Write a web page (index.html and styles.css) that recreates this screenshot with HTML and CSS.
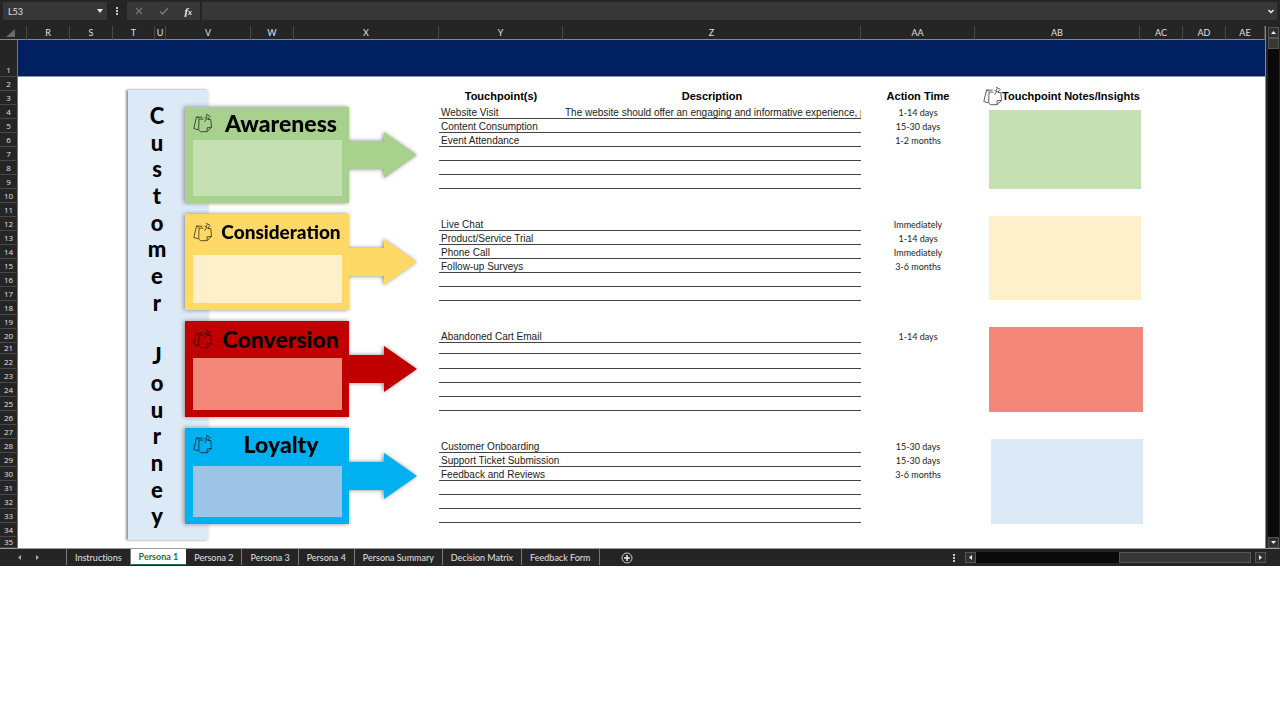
FILE: index.html
```html
<!DOCTYPE html>
<html lang="en">
<head>
<meta charset="utf-8">
<title>Customer Journey</title>
<link rel="stylesheet" href="styles.css">
</head>
<body>
<svg class="defs" aria-hidden="true">
  <symbol id="note" viewBox="0 0 20 20">
    <path d="M6 5 3.500 4 .8 15.500l4.500 1.300M3.500 4l6 .2M10.500 6.200 6 6l-.3 11 1.800 1.700h6.500l4.500-4.200-.7-8-2.300.2M18.500 14.500l-4.300.2-.2 4M11.500 4.200l4.500 2.600M13.200 4.800 14 2.500M16.500 4l-1.300 2M13 1.200l4.500 2.300M13.500 5.800l-2 3" fill="none" stroke="currentColor" stroke-width=".9"/>
  </symbol>
  <symbol id="arrow" viewBox="0 0 68 46">
    <path d="M0 9h35V0l33 23-33 23v-9H0z" fill="currentColor"/>
  </symbol>
</svg>
<main class="app">
  <header class="formula-bar">
    <div class="name-box">
      <input class="name-input" aria-label="Name box" value="L53">
      <button class="icon-button" aria-label="Open name list"><svg width="6" height="4"><path d="M0 0h6L3 4z" fill="#e8e8e8"/></svg></button>
    </div>
    <svg class="grip" width="2" height="8"><path d="M0 0h2v2H0zM0 3h2v2H0zM0 6h2v2H0z" fill="#ccc"/></svg>
    <div class="formula-actions">
      <button class="icon-button" aria-label="Cancel"><svg width="8" height="8"><path d="M1 1l6 6M7 1 1 7" stroke="#777" stroke-width="1.300"/></svg></button>
      <button class="icon-button" aria-label="Enter"><svg width="10" height="8"><path d="M1 4.500 3.500 7 9 1" fill="none" stroke="#777" stroke-width="1.500"/></svg></button>
      <button class="icon-button fx" aria-label="Insert function">f<small>x</small></button>
    </div>
    <div class="formula-field">
      <input class="formula-input" aria-label="Formula">
      <button class="icon-button" aria-label="Expand formula bar"><svg width="6" height="5"><path d="M.5 1 3 3.500 5.500 1" fill="none" stroke="#eee" stroke-width="1.400"/></svg></button>
    </div>
  </header>

  <div class="workspace">
    <div class="sheet">
      <table class="grid">
        <colgroup>
          <col class="c-head"><col class="c-q"><col class="c-m"><col class="c-m"><col class="c-t"><col class="c-u"><col class="c-v"><col class="c-m"><col class="c-x"><col class="c-y"><col class="c-z"><col class="c-aa"><col class="c-ab"><col class="c-m"><col class="c-m"><col>
        </colgroup>
        <thead>
          <tr>
            <th class="corner"><svg width="9" height="8"><path d="M9 0v8H0z" fill="#6a6a6a"/></svg></th>
            <th></th><th>R</th><th>S</th><th>T</th><th>U</th><th>V</th><th>W</th><th>X</th><th>Y</th><th>Z</th><th>AA</th><th>AB</th><th>AC</th><th>AD</th><th>AE</th>
          </tr>
        </thead>
        <tbody>
          <tr class="banner"><th>1</th><td colspan="15"></td></tr>
          <tr><th>2</th><td colspan="15"></td></tr>
          <tr class="titles"><th>3</th><td colspan="8"></td><td>Touchpoint(s)</td><td>Description</td><td>Action Time</td><td class="notes-title">Touchpoint Notes/Insights</td><td colspan="3"></td></tr>
          <tr class="line"><th>4</th><td colspan="8"></td><td>Website Visit</td><td>The website should offer an engaging and informative experience, pro</td><td>1-14 days</td><td colspan="4"></td></tr>
          <tr class="line"><th>5</th><td colspan="8"></td><td>Content Consumption</td><td></td><td>15-30 days</td><td colspan="4"></td></tr>
          <tr class="line"><th>6</th><td colspan="8"></td><td>Event Attendance</td><td></td><td>1-2 months</td><td colspan="4"></td></tr>
          <tr class="line"><th>7</th><td colspan="8"></td><td></td><td></td><td></td><td colspan="4"></td></tr>
          <tr class="line"><th>8</th><td colspan="8"></td><td></td><td></td><td></td><td colspan="4"></td></tr>
          <tr class="line"><th>9</th><td colspan="8"></td><td></td><td></td><td></td><td colspan="4"></td></tr>
          <tr><th>10</th><td colspan="15"></td></tr>
          <tr><th>11</th><td colspan="15"></td></tr>
          <tr class="line"><th>12</th><td colspan="8"></td><td>Live Chat</td><td></td><td>Immediately</td><td colspan="4"></td></tr>
          <tr class="line"><th>13</th><td colspan="8"></td><td>Product/Service Trial</td><td></td><td>1-14 days</td><td colspan="4"></td></tr>
          <tr class="line"><th>14</th><td colspan="8"></td><td>Phone Call</td><td></td><td>Immediately</td><td colspan="4"></td></tr>
          <tr class="line"><th>15</th><td colspan="8"></td><td>Follow-up Surveys</td><td></td><td>3-6 months</td><td colspan="4"></td></tr>
          <tr class="line"><th>16</th><td colspan="8"></td><td></td><td></td><td></td><td colspan="4"></td></tr>
          <tr class="line"><th>17</th><td colspan="8"></td><td></td><td></td><td></td><td colspan="4"></td></tr>
          <tr><th>18</th><td colspan="15"></td></tr>
          <tr><th>19</th><td colspan="15"></td></tr>
          <tr class="line"><th>20</th><td colspan="8"></td><td>Abandoned Cart Email</td><td></td><td>1-14 days</td><td colspan="4"></td></tr>
          <tr class="line short"><th>21</th><td colspan="8"></td><td></td><td></td><td></td><td colspan="4"></td></tr>
          <tr class="line tall"><th>22</th><td colspan="8"></td><td></td><td></td><td></td><td colspan="4"></td></tr>
          <tr class="line"><th>23</th><td colspan="8"></td><td></td><td></td><td></td><td colspan="4"></td></tr>
          <tr class="line"><th>24</th><td colspan="8"></td><td></td><td></td><td></td><td colspan="4"></td></tr>
          <tr class="line"><th>25</th><td colspan="8"></td><td></td><td></td><td></td><td colspan="4"></td></tr>
          <tr><th>26</th><td colspan="15"></td></tr>
          <tr><th>27</th><td colspan="15"></td></tr>
          <tr class="line"><th>28</th><td colspan="8"></td><td>Customer Onboarding</td><td></td><td>15-30 days</td><td colspan="4"></td></tr>
          <tr class="line"><th>29</th><td colspan="8"></td><td>Support Ticket Submission</td><td></td><td>15-30 days</td><td colspan="4"></td></tr>
          <tr class="line"><th>30</th><td colspan="8"></td><td>Feedback and Reviews</td><td></td><td>3-6 months</td><td colspan="4"></td></tr>
          <tr class="line"><th>31</th><td colspan="8"></td><td></td><td></td><td></td><td colspan="4"></td></tr>
          <tr class="line"><th>32</th><td colspan="8"></td><td></td><td></td><td></td><td colspan="4"></td></tr>
          <tr class="line"><th>33</th><td colspan="8"></td><td></td><td></td><td></td><td colspan="4"></td></tr>
          <tr><th>34</th><td colspan="15"></td></tr>
          <tr class="short"><th>35</th><td colspan="15"></td></tr>
        </tbody>
      </table>

      <div class="journey">
        <span>C</span><span>u</span><span>s</span><span>t</span><span>o</span><span>m</span><span>e</span><span>r</span><span></span><span>J</span><span>o</span><span>u</span><span>r</span><span>n</span><span>e</span><span>y</span>
      </div>

      <div class="stages">
        <section class="stage awareness">
          <div class="card"><div class="card-head"><svg class="note"><use href="#note"/></svg><h2>Awareness</h2></div><div class="card-box"></div></div>
          <svg class="arrow"><use href="#arrow"/></svg>
        </section>
        <section class="stage consideration">
          <div class="card"><div class="card-head"><svg class="note"><use href="#note"/></svg><h2>Consideration</h2></div><div class="card-box"></div></div>
          <svg class="arrow"><use href="#arrow"/></svg>
        </section>
        <section class="stage conversion">
          <div class="card"><div class="card-head"><svg class="note"><use href="#note"/></svg><h2>Conversion</h2></div><div class="card-box"></div></div>
          <svg class="arrow"><use href="#arrow"/></svg>
        </section>
        <section class="stage loyalty">
          <div class="card"><div class="card-head"><svg class="note"><use href="#note"/></svg><h2>Loyalty</h2></div><div class="card-box"></div></div>
          <svg class="arrow"><use href="#arrow"/></svg>
        </section>
      </div>

      <svg class="note title-note"><use href="#note"/></svg>
      <div class="insights">
        <div class="insight green"></div>
        <div class="insight yellow"></div>
        <div class="insight red"></div>
        <div class="insight blue"></div>
      </div>
    </div>

    <div class="v-scroll">
      <button class="scroll-button" aria-label="Scroll up"><svg width="5" height="3"><path d="M2.500 0 5 3H0z" fill="#eee"/></svg></button>
      <div class="v-track"><div class="v-thumb"></div></div>
      <button class="scroll-button" aria-label="Scroll down"><svg width="5" height="3"><path d="M0 0h5L2.500 3z" fill="#eee"/></svg></button>
    </div>
  </div>

  <footer class="tab-bar">
    <div class="tab-nav">
      <button class="icon-button" aria-label="Previous sheet"><svg width="3" height="5"><path d="M3 0v5L0 2.500z" fill="#aaa"/></svg></button>
      <button class="icon-button" aria-label="Next sheet"><svg width="3" height="5"><path d="M0 0v5l3-2.500z" fill="#aaa"/></svg></button>
    </div>
    <nav class="tabs">
      <button class="tab">Instructions</button>
      <button class="tab active">Persona 1</button>
      <button class="tab">Persona 2</button>
      <button class="tab">Persona 3</button>
      <button class="tab">Persona 4</button>
      <button class="tab">Persona Summary</button>
      <button class="tab">Decision Matrix</button>
      <button class="tab">Feedback Form</button>
    </nav>
    <button class="icon-button add" aria-label="New sheet"><svg width="12" height="12"><circle cx="6" cy="6" r="5" fill="none" stroke="#ccc"/><path d="M6 3v6M3 6h6" stroke="#eee" stroke-width="1.500"/></svg></button>
    <svg class="grip bar-grip" width="2" height="8"><path d="M0 0h2v2H0zM0 3h2v2H0zM0 6h2v2H0z" fill="#ccc"/></svg>
    <div class="h-scroll">
      <button class="scroll-button" aria-label="Scroll left"><svg width="3" height="5"><path d="M3 0v5L0 2.500z" fill="#eee"/></svg></button>
      <div class="h-track"><div class="h-thumb"></div></div>
      <button class="scroll-button" aria-label="Scroll right"><svg width="3" height="5"><path d="M0 0v5l3-2.500z" fill="#eee"/></svg></button>
    </div>
  </footer>
</main>
</body>
</html>
```
FILE: styles.css
```css
* { box-sizing: border-box; }
body { margin: 0; background: #fff; font-family: "Open Sans", "Noto Sans", sans-serif; font-variant-ligatures: none; }
button, input { font: inherit; color: inherit; border: 0; padding: 0; margin: 0; background: none; }
svg { display: block; flex: none; }
.defs { position: absolute; width: 0; height: 0; }

.app { display: flex; flex-direction: column; min-width: 1280px; background: #252525; color: #e0e0e0; }
.icon-button { display: flex; align-items: center; justify-content: center; }

.formula-bar { display: flex; align-items: center; height: 26px; padding: 0 3px 4px; font-family: Lato, sans-serif; font-size: 9px; }
.name-box { display: flex; align-items: center; width: 104px; height: 18px; padding: 0 4px 0 5px; background: #373737; }
.name-input { flex: 1; min-width: 0; }
.grip { margin: 0 9px; }
.formula-actions { display: flex; justify-content: space-around; width: 73px; height: 18px; background: #373737; }
.fx { font-family: "Liberation Serif", serif; font-style: italic; font-weight: bold; font-size: 11px; color: #eee; }
.fx small { font-size: 8px; padding-top: 3px; }
.formula-field { display: flex; flex: 1; height: 18px; margin-left: 2px; padding-right: 3px; background: #373737; }
.formula-input { flex: 1; }

.workspace { display: flex; }
.sheet { position: relative; flex: 1; border-right: 1px solid #888; }

.grid { width: 100%; table-layout: fixed; border-collapse: separate; border-spacing: 0; background: #fff; color: #1c1c1c; font-family: "Liberation Sans", Arial, sans-serif; font-size: 10px; line-height: 11px; }
.c-head { width: 18px; }
.c-q { width: 9px; }
.c-m { width: 43px; }
.c-t { width: 42px; }
.c-u { width: 11px; }
.c-v { width: 85px; }
.c-x { width: 145px; }
.c-y { width: 124px; }
.c-z { width: 298px; }
.c-aa { width: 114px; }
.c-ab { width: 165px; }
.grid th, .grid td { height: 14px; padding: 0; overflow: hidden; white-space: nowrap; }
.grid th { background: #252525; color: #e0e0e0; border-bottom: 1px solid #484848; border-right: 1px solid #777; font-family: "Open Sans", "Noto Sans", sans-serif; font-size: 8px; font-weight: 400; line-height: 13px; vertical-align: bottom; text-align: center; }
.grid thead th { border-right-color: #484848; border-bottom-color: #888; font-family: Lato, sans-serif; font-size: 9px; }
.grid thead .corner { border-right: 0; padding-left: 6px; }
.grid .corner svg { margin-bottom: 2px; }
.banner th, .grid .banner td { height: 37px; }
.grid .banner td { background: #00205f; border-bottom: 1px solid #8a94b4; }
.grid .short th, .grid .short td { height: 11px; line-height: 10px; }
.grid .tall th, .grid .tall td { height: 15px; }
.grid .titles td { color: #000; font-size: 11px; font-weight: bold; text-align: center; vertical-align: top; }
.grid .notes-title { padding-left: 27px; }
.grid .line td { vertical-align: bottom; }
.line td:nth-child(3), .line td:nth-child(4) { border-bottom: 1px solid #444; }
.grid .line td:nth-child(3) { padding-left: 2px; }
.grid .line td:nth-child(4) { padding-left: 2px; }
.grid .line td:nth-child(5) { padding-bottom: 1px; font-family: Lato, "Open Sans", sans-serif; font-size: 9px; text-align: center; }

/* Shapes drawn over the cells */
.journey { position: absolute; left: 128px; top: 64px; width: 80px; height: 450px; display: flex; flex-direction: column; padding: 13px 22px 10px 0; background: #dce9f6; box-shadow: -2px 0 2px #999, 0 0 3px #ccc; color: #000; font: 900 22px/26px Lato, "Open Sans", sans-serif; text-align: center; }
.journey span { flex: 1; }
.stages { position: absolute; left: 185px; top: 81px; display: flex; flex-direction: column; gap: 11px; color: #000; }
.stage { display: flex; align-items: center; filter: drop-shadow(-1px 0 2px #888); }
.card { display: flex; flex-direction: column; width: 164px; height: 96px; padding: 0 7px 7px 8px; background: var(--main); }
.card-head { display: flex; flex: 1; align-items: center; gap: 7px; padding-bottom: 2px; }
.card-head h2 { flex: 1; margin: 0; font: 900 23px/26px Lato, "Open Sans", sans-serif; text-align: center; white-space: nowrap; }
.card-box { height: var(--box); background: var(--soft); }
.note { width: 20px; height: 20px; opacity: .7; }
.arrow { width: 68px; height: 46px; color: var(--main); }
.awareness { --main: #a9d18e; --soft: #c5e0b3; --box: 56px; }
.consideration { --main: #ffd966; --soft: #fff0cc; --box: 48px; }
.conversion { --main: #c00000; --soft: #f2877a; --box: 52px; }
.loyalty { --main: #00b0f0; --soft: #9dc3e6; --box: 51px; }
.consideration .card-head, .loyalty .card-head { padding-bottom: 6px; }
.consideration h2 { font-size: 19px; }
.title-note { position: absolute; left: 983px; top: 60px; color: #000; }
.insights { position: absolute; left: 989px; top: 84px; width: 154px; display: flex; flex-direction: column; gap: 27px; }
.insight { width: 152px; height: 85px; }
.green { height: 79px; background: #c5e0b3; }
.yellow { height: 84px; background: #fff0cc; }
.red { width: 154px; background: #f2877a; }
.blue { align-self: flex-end; background: #dce9f6; }

.scroll-button { display: flex; align-items: center; justify-content: center; width: 11px; height: 11px; border: 1px solid #555; background: #303030; }
.v-scroll { display: flex; flex-direction: column; width: 14px; padding: 1px 1px 0 2px; }
.v-track { flex: 1; width: 11px; background: #0a0a0a; }
.v-thumb { height: 11px; border: 1px solid #555; background: #373737; }

.tab-bar { display: flex; align-items: center; height: 18px; padding-right: 14px; border-top: 1px solid #999; font-family: Lato, sans-serif; font-size: 9px; }
.tab-nav { display: flex; gap: 15px; width: 66px; padding-left: 18px; }
.tabs { display: flex; align-self: stretch; padding-bottom: 1px; }
.tab { padding: 0 8px; border-right: 1px solid #777; white-space: nowrap; }
.tab:first-child { border-left: 1px solid #777; }
.tab.active { background: #fff; color: #217346; font-weight: bold; border-right: 0; border-bottom: 1px solid #217346; }
.add { margin-left: 21px; }
.bar-grip { margin-left: auto; margin-right: 10px; }
.h-scroll { display: flex; width: 301px; }
.h-track { flex: 1; margin-right: 4px; background: #0a0a0a; }
.h-thumb { width: 48%; height: 11px; margin-left: auto; border: 1px solid #555; background: #373737; }
```
